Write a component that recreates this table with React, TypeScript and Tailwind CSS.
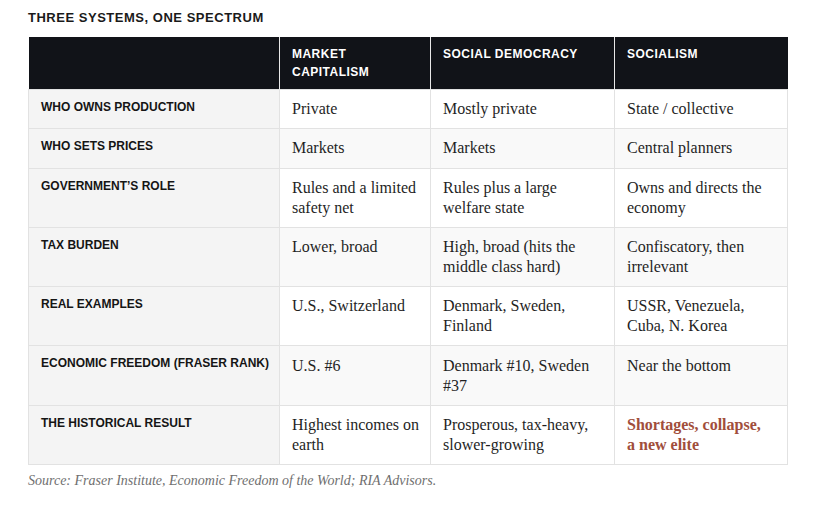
const serif = "font-['Liberation_Serif',Georgia,serif]";
const sans = "font-['Liberation_Sans',Arial,sans-serif]";

type Row = { label: string; cells: React.ReactNode[] };

const rows: Row[] = [
  { label: "WHO OWNS PRODUCTION", cells: ["Private", "Mostly private", "State / collective"] },
  { label: "WHO SETS PRICES", cells: ["Markets", "Markets", "Central planners"] },
  {
    label: "GOVERNMENT’S ROLE",
    cells: [
      <>Rules and a limited<br />safety net</>,
      <>Rules plus a large<br />welfare state</>,
      <>Owns and directs the<br />economy</>,
    ],
  },
  {
    label: "TAX BURDEN",
    cells: [
      "Lower, broad",
      <>High, broad (hits the<br />middle class hard)</>,
      <>Confiscatory, then<br />irrelevant</>,
    ],
  },
  {
    label: "REAL EXAMPLES",
    cells: [
      "U.S., Switzerland",
      <>Denmark, Sweden,<br />Finland</>,
      <>USSR, Venezuela,<br />Cuba, N. Korea</>,
    ],
  },
  {
    label: "ECONOMIC FREEDOM (FRASER RANK)",
    cells: ["U.S. #6", <>Denmark #10, Sweden<br />#37</>, "Near the bottom"],
  },
  {
    label: "THE HISTORICAL RESULT",
    cells: [
      <>Highest incomes on<br />earth</>,
      <>Prosperous, tax-heavy,<br />slower-growing</>,
      <span className="font-bold text-[#a14e3b]">
        Shortages, collapse,<br />a new elite
      </span>,
    ],
  },
];

export default function App() {
  return (
    <div className="w-[819px] h-[508px] bg-white pl-[28px] pt-[9px]">
      <h2 className={`${sans} text-[13px] font-bold tracking-[0.04em] text-[#1a1a1a] leading-[18px] mb-[10px]`}>
        THREE SYSTEMS, ONE SPECTRUM
      </h2>
      <table className="w-[759px] table-fixed border-collapse">
        <colgroup>
          <col className="w-[251px]" />
          <col className="w-[151px]" />
          <col className="w-[184px]" />
          <col className="w-[173px]" />
        </colgroup>
        <thead>
          <tr className={`${sans} bg-[#111318] text-white text-[12px] font-bold tracking-[0.04em] leading-[18px] text-left`}>
            <th className="h-[52px] px-3 pt-[8px] pb-[8px] align-top"></th>
            <th className="px-3 pt-[8px] pb-[8px] align-top border-l border-[#e8e8e8]">MARKET<br />CAPITALISM</th>
            <th className="px-3 pt-[8px] pb-[8px] align-top border-l border-[#e8e8e8]">SOCIAL DEMOCRACY</th>
            <th className="px-3 pt-[8px] pb-[8px] align-top border-l border-[#e8e8e8]">SOCIALISM</th>
          </tr>
        </thead>
        <tbody>
          {rows.map((row, i) => (
            <tr key={row.label} className={i % 2 === 0 ? "bg-white" : "bg-[#f9f9f9]"}>
              <td className={`${sans} bg-[#f4f4f4] text-[12px] font-bold leading-[16px] text-[#151515] px-3 pt-[9px] pb-[9px] align-top whitespace-nowrap border border-[#e2e2e2]`}>
                {row.label}
              </td>
              {row.cells.map((c, j) => (
                <td
                  key={j}
                  className={`${serif} text-[16px] leading-[20px] text-[#1f1f1f] px-3 py-[9.15px] align-top whitespace-nowrap border border-[#e2e2e2]`}
                >
                  {c}
                </td>
              ))}
            </tr>
          ))}
        </tbody>
      </table>
      <p className={`${serif} italic text-[14px] text-[#6f6f6f] leading-[18px] mt-[7px]`}>
        Source: Fraser Institute, Economic Freedom of the World; RIA Advisors.
      </p>
    </div>
  );
}
